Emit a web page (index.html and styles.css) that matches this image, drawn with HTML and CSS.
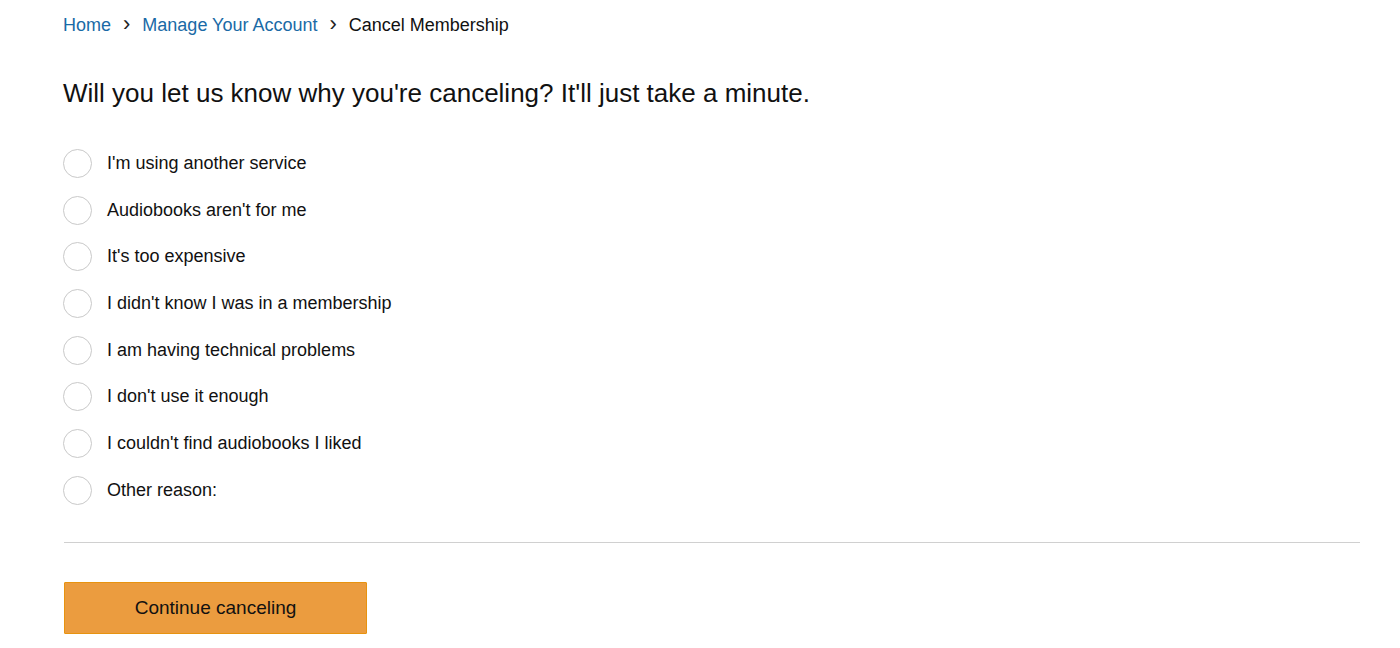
FILE: index.html
```html
<!DOCTYPE html>
<html lang="en">
<head>
<meta charset="utf-8">
<title>Cancel Membership</title>
<link rel="stylesheet" href="styles.css">
</head>
<body>
<div class="page">
  <nav class="breadcrumb">
    <a href="#" class="crumb-link">Home</a>
    <span class="sep">&#8250;</span>
    <a href="#" class="crumb-link">Manage Your Account</a>
    <span class="sep">&#8250;</span>
    <span class="crumb-current">Cancel Membership</span>
  </nav>
  <h1 class="title">Will you let us know why you're canceling? It'll just take a minute.</h1>
  <form class="reasons">
    <label class="reason"><span class="radio"></span><span class="reason-text">I'm using another service</span></label>
    <label class="reason"><span class="radio"></span><span class="reason-text">Audiobooks aren't for me</span></label>
    <label class="reason"><span class="radio"></span><span class="reason-text">It's too expensive</span></label>
    <label class="reason"><span class="radio"></span><span class="reason-text">I didn't know I was in a membership</span></label>
    <label class="reason"><span class="radio"></span><span class="reason-text">I am having technical problems</span></label>
    <label class="reason"><span class="radio"></span><span class="reason-text">I don't use it enough</span></label>
    <label class="reason"><span class="radio"></span><span class="reason-text">I couldn't find audiobooks I liked</span></label>
    <label class="reason"><span class="radio"></span><span class="reason-text">Other reason:</span></label>
  </form>
  <hr class="divider">
  <button class="continue" type="button">Continue canceling</button>
</div>
</body>
</html>
```
FILE: styles.css
```css
html, body {
  margin: 0;
  padding: 0;
  background: #fff;
}
body {
  font-family: "Liberation Sans", Arial, sans-serif;
  color: #111;
}
.page {
  padding: 13px 40px 0 63px;
}
.breadcrumb {
  display: flex;
  align-items: center;
  font-size: 18px;
  line-height: 24px;
  height: 24px;
}
.crumb-link {
  color: #1a6aa6;
  text-decoration: none;
}
.sep {
  font-size: 22px;
  color: #222;
  margin: -3px 12px 0 12px;
  line-height: 20px;
}
.crumb-current {
  color: #111;
}
.title {
  font-size: 26px;
  font-weight: normal;
  margin: 39px 0 0 0;
  line-height: 34px;
  color: #111;
}
.reasons {
  display: flex;
  flex-direction: column;
  gap: 17.7px;
  margin-top: 39px;
}
.reason {
  display: flex;
  align-items: center;
  gap: 15px;
  height: 29px;
  font-size: 18px;
}
.radio {
  box-sizing: border-box;
  width: 29px;
  height: 29px;
  border: 1px solid #c9c9c9;
  border-radius: 50%;
  flex: none;
}
.divider {
  border: none;
  border-top: 1px solid #d0d0d0;
  margin: 37px 0 0 1px;
  height: 0;
}
.continue {
  margin: 39px 0 0 1px;
  width: 303px;
  height: 52px;
  background: #eb9c3f;
  border: 1px solid #e8930f;
  border-radius: 1px;
  font-family: "Liberation Sans", Arial, sans-serif;
  font-size: 19px;
  color: #111;
  cursor: pointer;
}
```
